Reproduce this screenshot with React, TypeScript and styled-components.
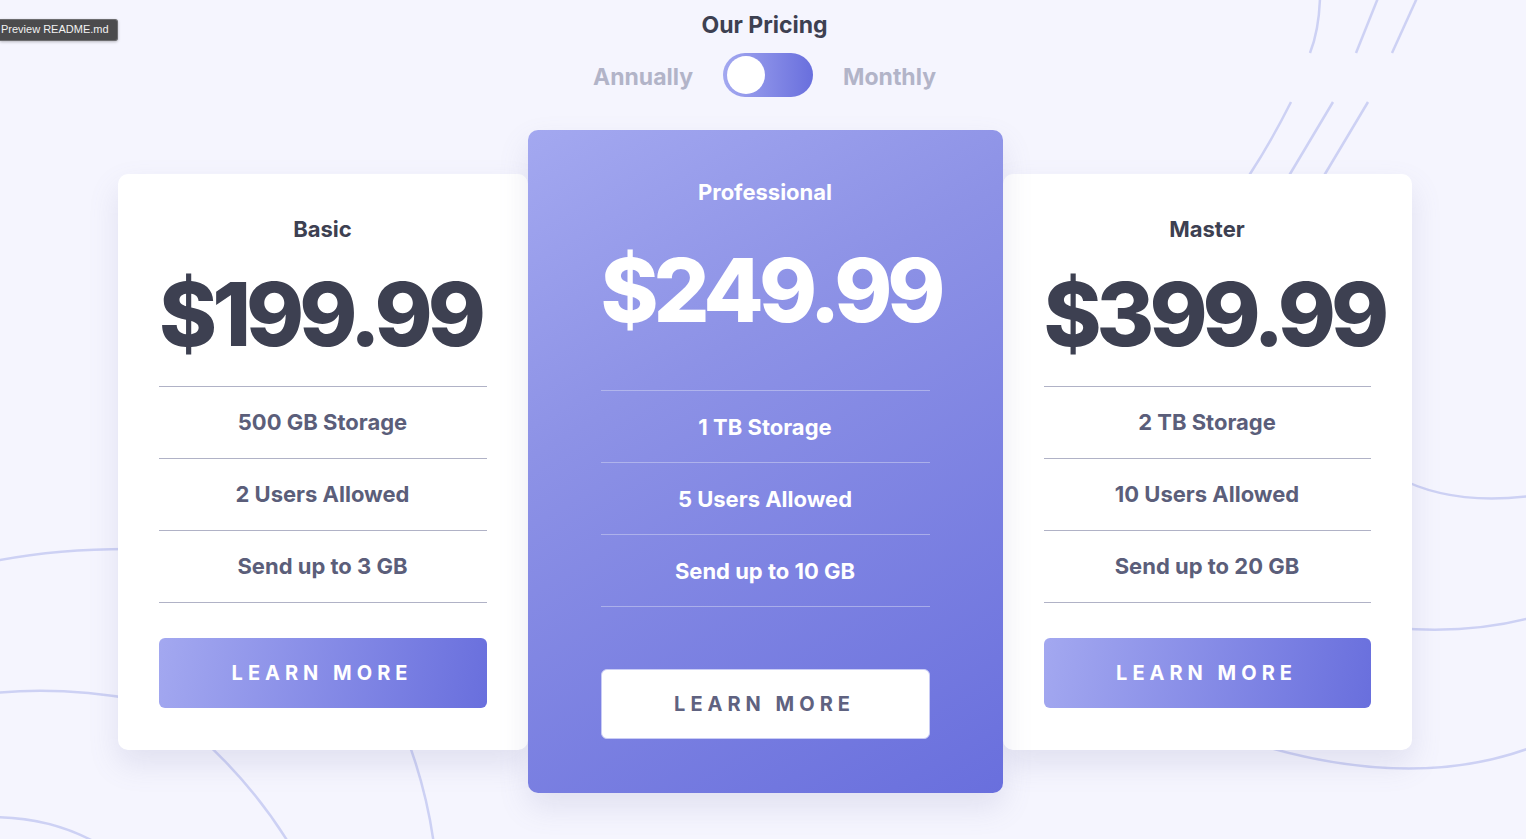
import React, {useState} from 'react';
import styled, {createGlobalStyle} from 'styled-components';

const GlobalStyle = createGlobalStyle`
    html, body {
        margin: 0;
        padding: 0;
        background: #f5f5fe;
        font-family: Inter, "Noto Sans", sans-serif;
    }
    * {
        box-sizing: border-box;
    }
`;

const Page = styled.main`
    position: relative;
    min-height: 839px;
    overflow: hidden;
    display: flex;
    flex-direction: column;
    align-items: center;
    padding: 11px 0 0 3px;
`;

const Decor = styled.svg`
    position: absolute;
    inset: 0;
    width: 1526px;
    height: 839px;
    pointer-events: none;
    z-index: 0;
`;

const Tooltip = styled.div`
    position: absolute;
    top: 19px;
    left: 0;
    z-index: 5;
    padding: 3px 8px 4px 1px;
    background: #4b4b4d;
    border: 1px solid #6d6d70;
    border-left: none;
    border-radius: 0 3px 3px 0;
    color: #f2f2f2;
    font-family: "Liberation Sans", Arial, sans-serif;
    font-size: 11px;
    line-height: 13px;
    box-shadow: 0 1px 3px rgba(0, 0, 0, 0.25);
`;

const Heading = styled.h1`
    position: relative;
    z-index: 1;
    margin: 0;
    font-size: 23px;
    line-height: 28px;
    font-weight: 700;
    color: #3d4051;
`;

const ToggleRow = styled.div`
    position: relative;
    z-index: 1;
    display: flex;
    align-items: center;
    gap: 30px;
    margin-top: 14px;
`;

const ToggleLabel = styled.span`
    font-size: 23px;
    line-height: 28px;
    padding-top: 4px;
    font-weight: 700;
    color: #b2b4c8;
`;

const Switch = styled.button<{ $on: boolean }>`
    position: relative;
    width: 90px;
    height: 44px;
    border: none;
    border-radius: 22px;
    padding: 0;
    cursor: pointer;
    background: linear-gradient(90deg, #a3a8f0 0%, #696fdd 100%);
`;

const Knob = styled.span<{ $on: boolean }>`
    position: absolute;
    top: 3px;
    left: ${p => (p.$on ? '49px' : '4px')};
    width: 38px;
    height: 38px;
    border-radius: 50%;
    background: #fff;
    transition: left 0.2s;
`;

const Cards = styled.section`
    position: relative;
    z-index: 1;
    display: flex;
    align-items: center;
    margin-top: 33px;
`;

const Card = styled.article<{ $featured?: boolean; $width: number }>`
    width: ${p => p.$width}px;
    display: flex;
    flex-direction: column;
    align-items: stretch;
    padding: ${p => (p.$featured ? '49px 73px 54px' : '42px 41px 42px')};
    border-radius: 10px;
    text-align: center;
    background: ${p => (p.$featured
        ? 'linear-gradient(150deg, #a3a8f0 0%, #8d92e6 35%, #696fdd 100%)'
        : '#ffffff')};
    box-shadow: 0 14px 30px rgba(116, 120, 170, 0.16);
    z-index: ${p => (p.$featured ? 2 : 1)};
`;

const PlanName = styled.h2<{ $featured?: boolean }>`
    margin: 0;
    font-size: 22px;
    line-height: 26px;
    font-weight: 700;
    color: ${p => (p.$featured ? '#ffffff' : '#3d4051')};
`;

const Price = styled.div<{ $featured?: boolean }>`
    margin: ${p => (p.$featured ? '41px 0 56px' : '28px 0 28px')};
    font-size: 88px;
    line-height: 88px;
    font-weight: 800;
    letter-spacing: -5px;
    padding-right: 5px;
    color: ${p => (p.$featured ? '#ffffff' : '#3d4051')};
`;

const FeatureList = styled.ul<{ $featured?: boolean }>`
    list-style: none;
    margin: 0;
    padding: 0;
    border-top: 1px solid ${p => (p.$featured ? 'rgba(200, 203, 240, 0.6)' : '#b0b2c6')};
`;

const Feature = styled.li<{ $featured?: boolean }>`
    height: 72px;
    display: flex;
    align-items: center;
    justify-content: center;
    border-bottom: 1px solid ${p => (p.$featured ? 'rgba(200, 203, 240, 0.6)' : '#b0b2c6')};
    font-size: 22px;
    font-weight: 700;
    color: ${p => (p.$featured ? '#ffffff' : '#5b5e7a')};
`;

const LearnButton = styled.button<{ $featured?: boolean }>`
    height: 70px;
    margin-top: ${p => (p.$featured ? '62px' : '35px')};
    border: ${p => (p.$featured ? '1px solid #c9ccf5' : 'none')};
    border-radius: 6px;
    cursor: pointer;
    font-family: Inter, "Noto Sans", sans-serif;
    font-size: 20px;
    font-weight: 700;
    letter-spacing: 5px;
    padding-left: 5px;
    color: ${p => (p.$featured ? '#5f6280' : '#ffffff')};
    background: ${p => (p.$featured
        ? '#ffffff'
        : 'linear-gradient(100deg, #a3a8f0 0%, #696fdd 100%)')};
`;

type Plan = {
    name: string;
    annual: string;
    monthly: string;
    features: string[];
    featured?: boolean;
    width: number;
};

const plans: Plan[] = [
    {name: 'Basic', annual: '$199.99', monthly: '$19.99', features: ['500 GB Storage', '2 Users Allowed', 'Send up to 3 GB'], width: 410},
    {name: 'Professional', annual: '$249.99', monthly: '$24.99', features: ['1 TB Storage', '5 Users Allowed', 'Send up to 10 GB'], featured: true, width: 475},
    {name: 'Master', annual: '$399.99', monthly: '$39.99', features: ['2 TB Storage', '10 Users Allowed', 'Send up to 20 GB'], width: 409},
];

// Líneas decorativas del fondo
const Background = () => (
    <Decor viewBox="0 0 1526 839" fill="none" stroke="#cdd1f4" strokeWidth={2.5} strokeLinecap="butt">
        <path d="M1320 -2 Q1319 30 1310 53"/>
        <path d="M1378 -2 L1356 53"/>
        <path d="M1417 -2 L1392 53"/>
        <path d="M1291 102 Q1272 140 1250 174 L1230 210"/>
        <path d="M1333 102 L1290 174 L1268 210"/>
        <path d="M1368 102 L1325 174 L1303 210"/>
        <path d="M-5 561 Q60 548 140 549"/>
        <path d="M-5 693 Q60 686 140 700"/>
        <path d="M190 728 Q250 780 290 845"/>
        <path d="M402 725 Q426 785 434 845"/>
        <path d="M-5 817 Q55 818 100 845"/>
        <path d="M1395 476 Q1450 506 1530 496"/>
        <path d="M1395 628 Q1470 634 1530 618"/>
        <path d="M1250 742 Q1410 792 1530 748"/>
    </Decor>
);

const App: React.FC = () => {
    const [monthly, setMonthly] = useState(false);

    return (
        <>
            <GlobalStyle/>
            <Page>
                <Background/>
                <Tooltip>Preview README.md</Tooltip>
                <Heading>Our Pricing</Heading>
                <ToggleRow>
                    <ToggleLabel>Annually</ToggleLabel>
                    <Switch $on={monthly} aria-label="Toggle billing" onClick={() => setMonthly(prev => !prev)}>
                        <Knob $on={monthly}/>
                    </Switch>
                    <ToggleLabel>Monthly</ToggleLabel>
                </ToggleRow>
                <Cards>
                    {plans.map(plan => (
                        <Card key={plan.name} $featured={plan.featured} $width={plan.width}>
                            <PlanName $featured={plan.featured}>{plan.name}</PlanName>
                            <Price $featured={plan.featured}>{monthly ? plan.monthly : plan.annual}</Price>
                            <FeatureList $featured={plan.featured}>
                                {plan.features.map(f => (
                                    <Feature key={f} $featured={plan.featured}>{f}</Feature>
                                ))}
                            </FeatureList>
                            <LearnButton $featured={plan.featured}>LEARN MORE</LearnButton>
                        </Card>
                    ))}
                </Cards>
            </Page>
        </>
    );
};

export default App;
